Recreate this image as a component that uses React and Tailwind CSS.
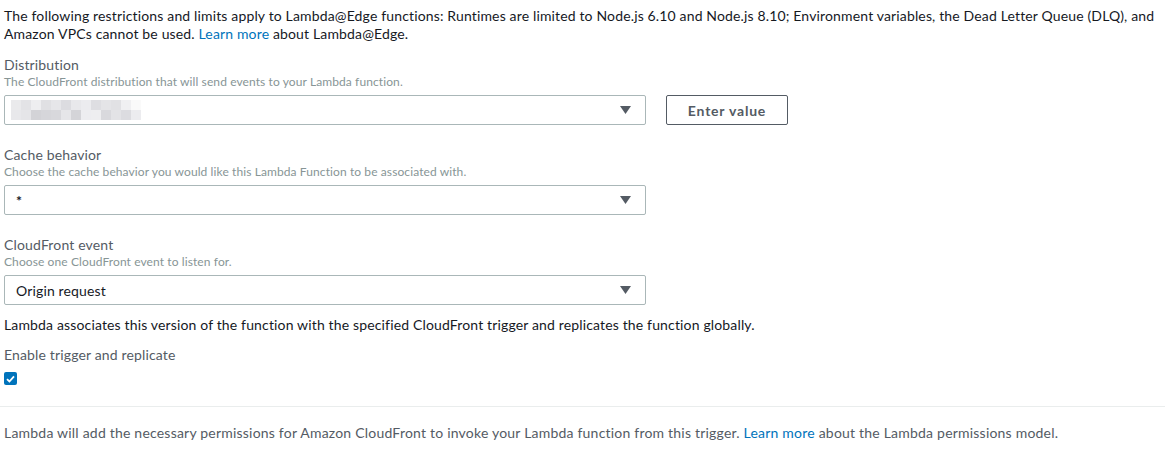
import React from "react";

const font = { fontFamily: "Lato, 'Noto Sans', sans-serif" };

function Arrow() {
  return (
    <svg width="11" height="8" viewBox="0 0 11 8" className="shrink-0">
      <path d="M0 0 H11 L5.5 8 Z" fill="#545b64" />
    </svg>
  );
}

const blur = [
  ["#eaeaec", "#e3e3e6", "#eeeef0", "#e0e0e3", "#e6e6e9", "#dcdce0", "#e8e8eb", "#ececef", "#dedee2", "#e4e4e7", "#e1e1e4", "#f0f0f2", "#fafafa"],
  ["#e8e8eb", "#e5e5e8", "#d3d3d7", "#d6d6da", "#d8d8dc", "#e6e6e9", "#d4d4d8", "#ededf0", "#eeeef0", "#d9d9dd", "#e3e3e6", "#dcdce0", "#ececef"],
];

function Field({ label, desc, children, extra }) {
  return (
    <div className="flex flex-col">
      <div className="text-[14px] leading-[18px] tracking-[0.15px] text-[#545b64]">{label}</div>
      <div className="text-[12px] leading-[16px] tracking-[0.1px] text-[#879596]">{desc}</div>
      <div className="mt-[5px] flex items-center gap-[20px]">
        <div className="flex h-[30px] w-[642px] items-center justify-between rounded-[2px] border border-[#aab7b8] bg-white pl-[11px] pr-[14px]">
          <div className="text-[14px] tracking-[0.15px] text-[#16191f]">{children}</div>
          <Arrow />
        </div>
        {extra}
      </div>
    </div>
  );
}

export default function App() {
  return (
    <div className="w-[1173px] h-[461px] bg-white pt-[7px]" style={font}>
      <div className="pl-[4px] pr-[8px]">
        <p className="text-[14px] leading-[18px] tracking-[0.15px] text-[#16191f]">
          The following restrictions and limits apply to Lambda@Edge functions: Runtimes are limited to Node.js 6.10 and Node.js 8.10; Environment variables, the Dead Letter Queue (DLQ), and Amazon VPCs cannot be used.{" "}
          <span className="text-[#0073bb]">Learn more</span> about Lambda@Edge.
        </p>
        <div className="mt-[13px] flex flex-col gap-[21px]">
          <Field
            label="Distribution"
            desc="The CloudFront distribution that will send events to your Lambda function."
            extra={
              <button className="h-[30px] w-[122px] rounded-[2px] border border-[#545b64] bg-white text-[14px] font-bold tracking-[0.8px] text-[#545b64]">
                Enter value
              </button>
            }
          >
            <div className="-ml-[5px] flex flex-col">
              {blur.map((row, i) => (
                <div key={i} className="flex">
                  {row.map((c, j) => (
                    <div key={j} className="h-[10px] w-[10px]" style={{ background: c }} />
                  ))}
                </div>
              ))}
            </div>
          </Field>
          <Field
            label="Cache behavior"
            desc="Choose the cache behavior you would like this Lambda Function to be associated with."
          >
            <span className="font-bold">*</span>
          </Field>
          <Field label="CloudFront event" desc="Choose one CloudFront event to listen for.">
            Origin request
          </Field>
        </div>
        <p className="mt-[11px] text-[14px] leading-[18px] tracking-[0.15px] text-[#16191f]">
          Lambda associates this version of the function with the specified CloudFront trigger and replicates the function globally.
        </p>
        <div className="mt-[12px] text-[14px] leading-[18px] tracking-[0.15px] text-[#545b64]">Enable trigger and replicate</div>
        <div className="mt-[8px] flex h-[13px] w-[13px] items-center justify-center rounded-[2px] bg-[#0073bb]">
          <svg width="9" height="8" viewBox="0 0 9 8">
            <path d="M1 4.2 L3.4 6.5 L8 1.3" stroke="white" strokeWidth="1.8" fill="none" />
          </svg>
        </div>
      </div>
      <div className="mt-[21px] h-px w-[1165px] bg-[#eaeded]" />
      <p className="mt-[17px] pl-[4px] text-[14px] leading-[18px] tracking-[0.21px] text-[#545b64]">
        Lambda will add the necessary permissions for Amazon CloudFront to invoke your Lambda function from this trigger.{" "}
        <span className="text-[#0073bb]">Learn more</span> about the Lambda permissions model.
      </p>
    </div>
  );
}
